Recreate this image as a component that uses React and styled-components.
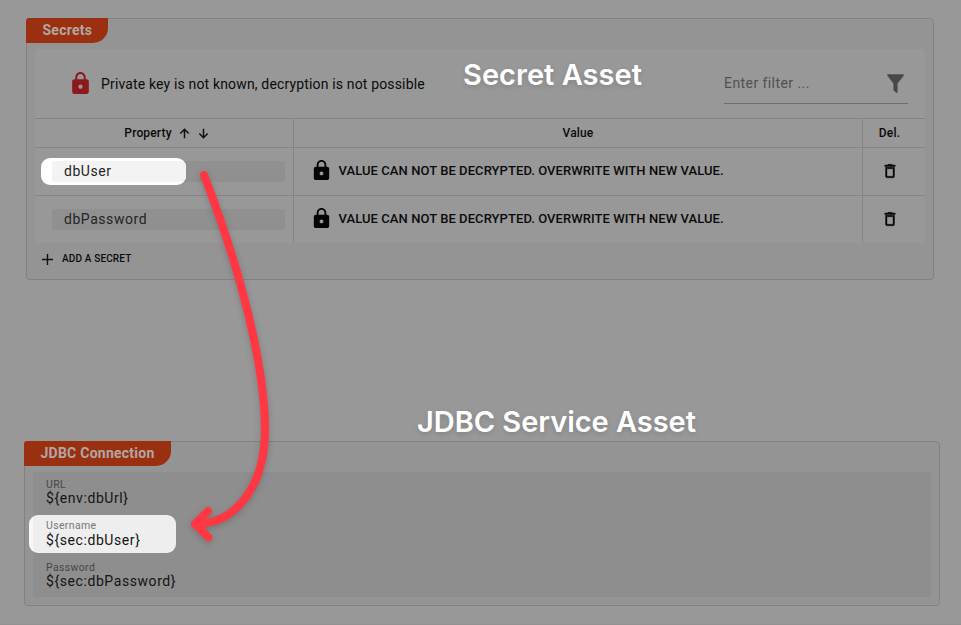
import React from "react";
import styled, { createGlobalStyle } from "styled-components";

const GlobalStyle = createGlobalStyle`
  *, *::before, *::after { box-sizing: border-box; }
  body { margin: 0; background: #989898; overflow: hidden; }
`;

const Page = styled.main`
  position: relative;
  width: 961px;
  height: 625px;
  padding: 18px 0 0 24px;
  background: #989898;
  border-bottom: 1px solid #929292;
  font-family: Roboto, sans-serif;
  color: #0b0b0b;
  overflow: hidden;
`;

const Panel = styled.section`
  width: ${(p) => p.$width}px;
  height: ${(p) => p.$height}px;
  margin: ${(p) => p.$margin};
  border: 1px solid #828282;
  border-radius: 4px;
  background: #949494;
`;

const Tab = styled.h2`
  width: ${(p) => p.$width}px;
  height: 25px;
  margin: -1px 0 0 -1px;
  padding-left: 16.5px;
  border-radius: 3px 0 15px 0;
  background: #9b3011;
  color: #b0a7a4;
  font-size: 14px;
  font-weight: 700;
  line-height: 24px;
  letter-spacing: 0.25px;
`;

const Table = styled.div`
  width: 890px;
  height: 194px;
  margin: 6px 0 0 8px;
  border-radius: 4px;
  background: #989898;
`;

const Toolbar = styled.div`
  display: flex;
  align-items: center;
  height: 69px;
  padding: 0 17px 0 33px;
`;

const Notice = styled.p`
  flex: 1;
  margin: 0 0 0 8px;
  font-size: 14px;
  line-height: 20px;
  letter-spacing: 0.155px;
`;

const Filter = styled.div`
  display: flex;
  align-items: center;
  justify-content: space-between;
  width: 184px;
  height: 40px;
  border-bottom: 1px solid #6e6e6e;
  color: #505050;
  font-size: 14px;
  letter-spacing: 0.43px;
`;

const Row = styled.div`
  display: grid;
  grid-template-columns: 258px 569px 63px;
  height: ${(p) => p.$height}px;
  border-top: 1px solid #858585;
`;

const Cell = styled.div`
  position: relative;
  display: flex;
  align-items: center;
  justify-content: ${(p) => (p.$center ? "center" : "flex-start")};
  padding: ${(p) => p.$pad ?? "0"};
  border-left: ${(p) => (p.$divided ? "1px solid #858585" : "0")};
  font-size: 12px;
  font-weight: 500;
  letter-spacing: 0.15px;
`;

const NameField = styled.div`
  width: 233px;
  height: 21px;
  padding-left: 12px;
  border-radius: 3px;
  background: #909090;
  color: #242424;
  font-size: 14px;
  font-weight: 400;
  line-height: 20px;
  letter-spacing: 0.55px;
`;

const FieldText = styled.span`
  position: relative;
  z-index: 2;
`;

const NameSpotlight = styled.div`
  position: absolute;
  z-index: 1;
  left: 5.7px;
  top: 9.5px;
  width: 145.7px;
  height: 27px;
  padding: 3.5px 0 0 11.3px;
  border-radius: 9px;
  background: #fff;
  overflow: hidden;

  &::after {
    content: "";
    display: block;
    height: 21px;
    border-radius: 3px 0 0 3px;
    background: #f3f3f3;
  }
`;

const Overwrite = styled.span`
  margin-left: 6px;
  font-size: 13px;
  letter-spacing: 0.07px;
`;

const SortIcons = styled.span`
  display: flex;
  gap: 8px;
  margin-left: 7px;
`;

const AddButton = styled.button`
  display: flex;
  align-items: center;
  gap: 9.5px;
  height: 32px;
  margin-left: 14.5px;
  padding: 0;
  border: 0;
  background: none;
  color: #0b0b0b;
  font: 500 10px/32px Roboto, sans-serif;
  letter-spacing: 0.15px;
`;

const Fields = styled.div`
  display: grid;
  grid-template-rows: 42px 41px 42px;
  width: 898px;
  margin: 6px 0 0 8px;
`;

const Field = styled.div`
  position: relative;
  padding: 6px 13px 0;
  border-radius: 4px 4px 0 0;
  background: #8e8e8e;
  color: #141414;
`;

const Label = styled.div`
  position: relative;
  z-index: 2;
  height: 12px;
  color: ${(p) => (p.$lit ? "#777" : "#474747")};
  font-size: 10.5px;
  line-height: ${(p) => (p.$lit ? 12 : 14)}px;
  letter-spacing: 0.35px;
`;

const FieldValue = styled.div`
  position: relative;
  z-index: 2;
  font-size: 14px;
  line-height: 16px;
  letter-spacing: 0.58px;
`;

const FieldSpotlight = styled.div`
  position: absolute;
  z-index: 1;
  left: -4px;
  top: 1px;
  width: 147px;
  height: 38px;
  border-radius: 9px;
  background: linear-gradient(90deg, #f8f8f8 4px, #eee 4px);
`;

const Caption = styled.div`
  position: absolute;
  z-index: 4;
  left: ${(p) => p.$x}px;
  top: ${(p) => p.$y}px;
  color: #fff;
  font: 600 29px/36px Inter, sans-serif;
  letter-spacing: ${(p) => p.$spacing}px;
  text-shadow: 0 2px 5px rgba(0, 0, 0, 0.14);
  white-space: nowrap;
`;

const Connector = styled.svg`
  position: absolute;
  z-index: 3;
  inset: 0;
  filter: drop-shadow(0 2px 3px rgba(0, 0, 0, 0.18));
  pointer-events: none;
`;

const Icon = ({ d, size, color = "#050505", stroke = 0 }) => (
  <svg
    width={size}
    height={size}
    viewBox="0 0 24 24"
    fill={color}
    stroke={color}
    strokeWidth={stroke}
    aria-hidden="true"
  >
    <path d={d} />
  </svg>
);

const LOCK =
  "M18 8h-1V6c0-2.76-2.24-5-5-5S7 3.24 7 6v2H6c-1.1 0-2 .9-2 2v10c0 1.1.9 2 2 2h12c1.1 0 2-.9 2-2V10c0-1.1-.9-2-2-2zm-6 9c-1.1 0-2-.9-2-2s.9-2 2-2 2 .9 2 2-.9 2-2 2zm3.1-9H8.9V6c0-1.71 1.39-3.1 3.1-3.1s3.1 1.39 3.1 3.1v2z";
const FILTER =
  "M14,12V19.88C14.04,20.18 13.94,20.5 13.71,20.71C13.32,21.1 12.69,21.1 12.3,20.71L10.29,18.7C10.06,18.47 9.96,18.16 10,17.87V12H9.97L4.21,4.62C3.87,4.19 3.95,3.56 4.38,3.22C4.57,3.08 4.78,3 5,3H19C19.22,3 19.43,3.08 19.62,3.22C20.05,3.56 20.13,4.19 19.79,4.62L14.03,12H14Z";
const TRASH =
  "M6 19c0 1.1.9 2 2 2h8c1.1 0 2-.9 2-2V7H6v12zM8 9h8v10H8V9zm7.5-5l-1-1h-5l-1 1H5v2h14V4z";

const Arrow = ({ d, width = 1.5 }) => (
  <svg width="11" height="11" viewBox="0 0 11 11" fill="none" stroke="#111" strokeWidth={width}>
    <path d={d} />
  </svg>
);

const SecretRow = ({ name, lit }) => (
  <Row $height={48}>
    <Cell $pad="0 0 0 17px">
      {lit && <NameSpotlight />}
      <NameField>
        <FieldText>{name}</FieldText>
      </NameField>
    </Cell>
    <Cell $divided $pad="0 0 2px 15.5px">
      <Icon d={LOCK} size={23} />
      <Overwrite>VALUE CAN NOT BE DECRYPTED. OVERWRITE WITH NEW VALUE.</Overwrite>
    </Cell>
    <Cell $divided $center $pad="0 9px 2px 0">
      <Icon d={TRASH} size={18} stroke={0.5} />
    </Cell>
  </Row>
);

const ConnectionField = ({ label, value, lit }) => (
  <Field>
    {lit && <FieldSpotlight />}
    <Label $lit={lit}>{label}</Label>
    <FieldValue>{value}</FieldValue>
  </Field>
);

export default function App() {
  return (
    <>
      <GlobalStyle />
      <Page>
        <Panel $width={908} $height={262} $margin="0 0 0 2px">
          <Tab $width={82}>Secrets</Tab>
          <Table>
            <Toolbar>
              <Icon d={LOCK} size={25} color="#8c1a1c" />
              <Notice>Private key is not known, decryption is not possible</Notice>
              <Filter>
                Enter filter ...
                <Icon d={FILTER} size={25} color="#484848" />
              </Filter>
            </Toolbar>
            <Row $height={29}>
              <Cell $center $pad="0 0 0 5px">
                Property
                <SortIcons>
                  <Arrow d="M5.5 10.2V1.5M1.3 5.5l4.2-4.2 4.2 4.2" />
                  <Arrow d="M5.5.8v8.7M1.3 5.5l4.2 4.2 4.2-4.2" />
                </SortIcons>
              </Cell>
              <Cell $center $divided>Value</Cell>
              <Cell $center $divided $pad="0 9px 0 0">Del.</Cell>
            </Row>
            <SecretRow name="dbUser" lit />
            <SecretRow name="dbPassword" />
          </Table>
          <AddButton>
            <Arrow d="M5.5 0v11M0 5.5h11" width={1.4} />
            ADD A SECRET
          </AddButton>
        </Panel>

        <Panel $width={916} $height={165} $margin="161px 0 0">
          <Tab $width={147}>JDBC Connection</Tab>
          <Fields>
            <ConnectionField label="URL" value="${env:dbUrl}" />
            <ConnectionField label="Username" value="${sec:dbUser}" lit />
            <ConnectionField label="Password" value="${sec:dbPassword}" />
          </Fields>
        </Panel>

        <Caption $x={463} $y={57} $spacing={0.03}>Secret Asset</Caption>
        <Caption $x={417} $y={404} $spacing={-0.04}>JDBC Service Asset</Caption>
        <Connector
          width="961"
          height="625"
          fill="none"
          stroke="#fe3743"
          strokeWidth="8"
          strokeLinecap="round"
          strokeLinejoin="round"
        >
          <path d="M204 175C240 268 265 365 265 430C265 483 238 524 195 524M208 511L195 524L208.5 537.5" />
        </Connector>
      </Page>
    </>
  );
}
